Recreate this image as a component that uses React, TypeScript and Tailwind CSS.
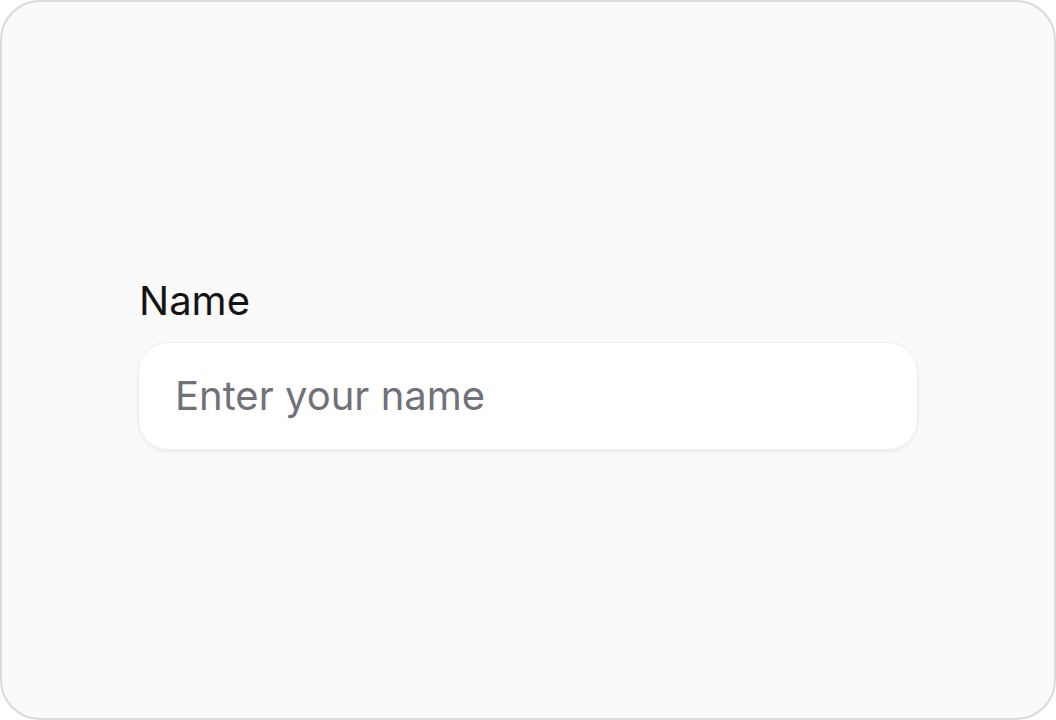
export default function App() {
  return (
    <div
      className="w-[1056px] h-[720px] bg-[#fafafa] border-2 border-[#dadad4] rounded-[40px] flex items-center justify-center"
      style={{ fontFamily: "Inter, 'Noto Sans', sans-serif" }}
    >
      <div className="w-[780px] flex flex-col gap-[17px] mt-[6px]">
        <label className="text-[40px] leading-[48px] font-normal text-[#141414] pl-[1px]">Name</label>
        <div className="h-[108px] bg-white rounded-[30px] border border-[#efefef] shadow-[0_2px_4px_rgba(0,0,0,0.06)] flex items-center px-[36px]">
          <input
            type="text"
            placeholder="Enter your name"
            className="w-full bg-transparent outline-none text-[40px] text-[#18181b] placeholder:text-[#71717a]"
          />
        </div>
      </div>
    </div>
  );
}
